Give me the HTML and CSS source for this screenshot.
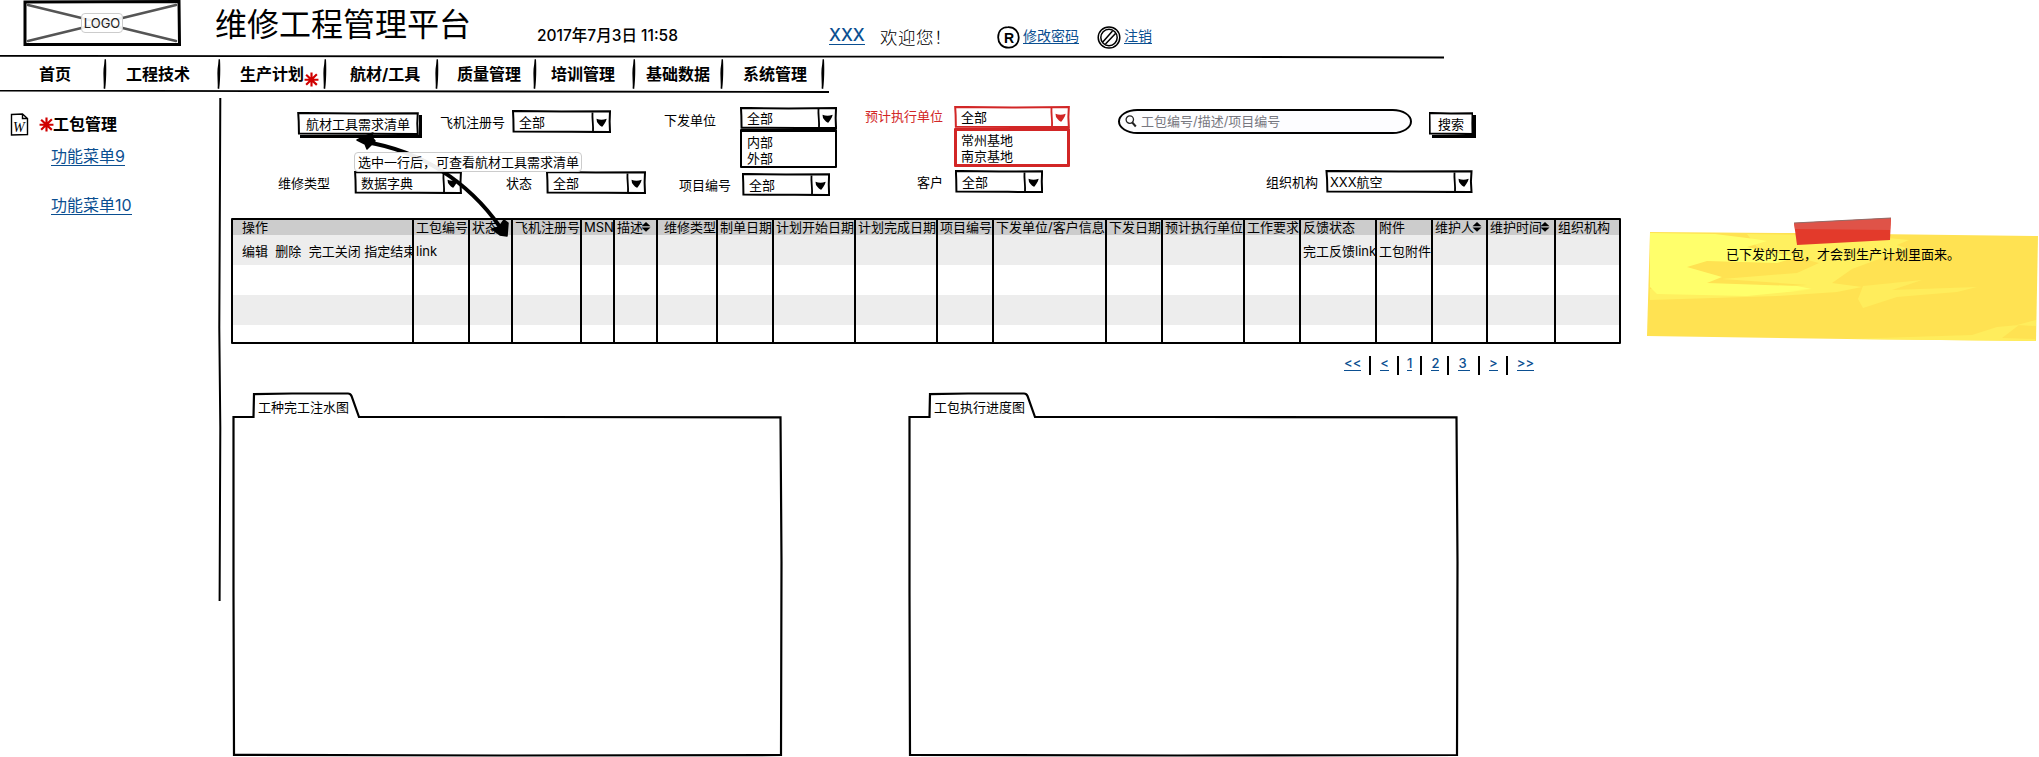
FILE: index.html
```html
<!DOCTYPE html>
<html lang="zh-CN">
<head>
<meta charset="utf-8">
<title>维修工程管理平台</title>
<link rel="stylesheet" href="styles.css">
</head>
<body>
<svg class="defs" width="0" height="0" aria-hidden="true">
  <symbol id="frame" viewBox="0 0 100 100" preserveAspectRatio="none">
    <path vector-effect="non-scaling-stroke" d="M1 4 L50 7 L99 5 L98.6 50 L99 96 L60 95 L1.6 94 L1.4 40 Z"/>
  </symbol>
  <symbol id="caret" viewBox="0 0 20 22">
    <path class="stroke" d="M1.5 1.5 C1 8 2.5 14 2 20.500"/>
    <path class="solid" d="M5.500 7.800 Q10.500 9.800 15.500 7.800 Q16 9.500 11.500 15.500 Q10 16.500 6 11 Z"/>
  </symbol>
  <symbol id="star" viewBox="0 0 14 14">
    <path d="M7 .5V13.500M.5 7.200H13.500M2 2.500L12 12M12 2.200L2 12"/>
  </symbol>
  <symbol id="sort" viewBox="0 0 10 10">
    <path d="M5 0L9.500 4.200H.5ZM.5 5.600H9.500L5 9.800Z"/>
  </symbol>
  <symbol id="sep" viewBox="0 0 4 30">
    <path d="M3 .3C3.600 10 3.200 22 2.200 30L.6 29.500C1.200 22 -.6 14 1.200 5L1.600 .3Z"/>
  </symbol>
  <symbol id="folder" viewBox="0 0 551 365">
    <path d="M1.500 25H21.500L22 2.200L60 1.500H116Q118.500 1.500 119.500 4L127 25L300 25L548.500 25.300L549.500 170L549 363L270 363.500L2 362.800L1.500 200Z"/>
  </symbol>
</svg>

<header class="header">
  <div class="logo">
    <svg width="158" height="46" viewBox="0 0 158 46">
      <path class="logo-cross" d="M5 5L153 41M153 5L5 41"/>
      <path class="logo-box" d="M2 2L156 1.500L156.500 44.500L2 44.500Z"/>
    </svg>
    <span class="logo-text">LOGO</span>
  </div>
  <h1 class="title">维修工程管理平台</h1>
  <span class="date">2017年7月3日 11:58</span>
  <a class="link user">XXX</a>
  <span class="welcome">欢迎您！</span>
  <svg class="head-icon" width="23" height="23" viewBox="0 0 23 23"><path d="M11 1.200C18 1 22 6 21.700 12C21.500 18 17 22 11.500 21.700C5 21.800 1 17 1.200 11C1.300 5 5 1.200 11 1.200Z"/><text x="7" y="17">R</text></svg>
  <a class="link pwd">修改密码</a>
  <svg class="head-icon ban" width="24" height="23" viewBox="0 0 24 23"><ellipse cx="12" cy="11.500" rx="10.800" ry="10.500"/><ellipse cx="12" cy="11.500" rx="8.200" ry="8.200"/><path d="M5.800 16L15.500 5M8.500 18L18.500 7.500"/></svg>
  <a class="link out">注销</a>
</header>
<svg class="rule" width="1444" height="4" viewBox="0 0 1444 4"><path d="M0 .8L500 1.500L1200 1.800L1444 2.500"/></svg>

<nav class="nav">
  <span class="nav-item w1">首页</span><svg class="sep"><use href="#sep"/></svg>
  <span class="nav-item w2">工程技术</span><svg class="sep"><use href="#sep"/></svg>
  <span class="nav-item w3">生产计划<svg class="star"><use href="#star"/></svg></span><svg class="sep"><use href="#sep"/></svg>
  <span class="nav-item w4">航材/工具</span><svg class="sep"><use href="#sep"/></svg>
  <span class="nav-item w5">质量管理</span><svg class="sep"><use href="#sep"/></svg>
  <span class="nav-item w6">培训管理</span><svg class="sep"><use href="#sep"/></svg>
  <span class="nav-item w7">基础数据</span><svg class="sep"><use href="#sep"/></svg>
  <span class="nav-item w8">系统管理</span><svg class="sep"><use href="#sep"/></svg>
</nav>
<svg class="rule" width="829" height="3" viewBox="0 0 829 3"><path d="M0 .6L300 1.200L829 2"/></svg>

<div class="body">
  <aside class="sidebar">
    <div class="menu">
      <div class="menu-head">
        <svg class="doc" width="19" height="23" viewBox="0 0 19 23"><path d="M1.500 1.500L12.500 1L17.500 5.500V21.500L1.500 22ZM12.500 1V5.500H17.500"/><text x="3" y="18.500">W</text></svg>
        <svg class="star"><use href="#star"/></svg><b>工包管理</b>
      </div>
      <a class="link menu-link">功能菜单9</a>
      <a class="link menu-link">功能菜单10</a>
    </div>
    <svg class="side-line" width="4" height="504" viewBox="0 0 4 504"><path d="M2.300 0L1.800 120L1.300 230L2.300 330L1.600 503"/></svg>
  </aside>

  <main class="main">
    <section class="filters">
      <div class="filter-row row-one">
        <button class="btn need"><svg class="fr"><use href="#frame"/></svg><span>航材工具需求清单</span></button>
        <label class="label l-reg">飞机注册号</label>
        <div class="select s-reg"><svg class="fr"><use href="#frame"/></svg><span>全部</span><svg class="caret"><use href="#caret"/></svg></div>
        <label class="label l-unit">下发单位</label>
        <div class="combo s-unit">
          <div class="select"><svg class="fr"><use href="#frame"/></svg><span>全部</span><svg class="caret"><use href="#caret"/></svg></div>
          <div class="options"><span>内部</span><span>外部</span></div>
        </div>
        <label class="label l-plan">预计执行单位</label>
        <div class="combo s-plan red">
          <div class="select"><svg class="fr"><use href="#frame"/></svg><span>全部</span><svg class="caret"><use href="#caret"/></svg></div>
          <div class="options"><span>常州基地</span><span>南京基地</span></div>
        </div>
        <div class="search"><svg width="12" height="13" viewBox="0 0 12 13"><circle cx="4.800" cy="4.600" r="3.700"/><path class="handle" d="M7.300 7.500L10.800 11.500"/></svg><span>工包编号/描述/项目编号</span></div>
        <button class="btn go"><svg class="fr"><use href="#frame"/></svg><span>搜索</span></button>
      </div>
      <div class="filter-row row-two">
        <label class="label l-type">维修类型</label>
        <div class="select s-type"><svg class="fr"><use href="#frame"/></svg><span>数据字典</span><svg class="caret"><use href="#caret"/></svg></div>
        <label class="label l-state">状态</label>
        <div class="select s-state"><svg class="fr"><use href="#frame"/></svg><span>全部</span><svg class="caret"><use href="#caret"/></svg></div>
        <label class="label l-item">项目编号</label>
        <div class="select s-item"><svg class="fr"><use href="#frame"/></svg><span>全部</span><svg class="caret"><use href="#caret"/></svg></div>
        <label class="label l-cust">客户</label>
        <div class="select s-cust"><svg class="fr"><use href="#frame"/></svg><span>全部</span><svg class="caret"><use href="#caret"/></svg></div>
        <label class="label l-org">组织机构</label>
        <div class="select s-org"><svg class="fr"><use href="#frame"/></svg><span>XXX航空</span><svg class="caret"><use href="#caret"/></svg></div>
      </div>
      <svg class="arrow" width="160" height="110" viewBox="0 0 160 110">
        <path class="curve" d="M16 11C70 20 118 50 150 96"/>
        <path class="tip" d="M7 9L20 3L23 2L21 5L25 10L17 18L15 13Z"/>
        <path class="tip" d="M157 105L150 104L142 98L149 96L154 89L158 92Z"/>
      </svg>
      <div class="tooltip">选中一行后，可查看航材工具需求清单</div>
    </section>

    <section class="data">
      <div class="grid">
        <div class="row head"><span>操作</span><span>工包编号</span><span>状态</span><span>飞机注册号</span><span>MSN</span><span>描述<svg class="sort"><use href="#sort"/></svg></span><span class="wide">维修类型</span><span>制单日期</span><span>计划开始日期</span><span>计划完成日期</span><span>项目编号</span><span>下发单位/客户信息</span><span>下发日期</span><span>预计执行单位</span><span>工作要求</span><span>反馈状态</span><span>附件</span><span>维护人<svg class="sort"><use href="#sort"/></svg></span><span>维护时间<svg class="sort"><use href="#sort"/></svg></span><span>组织机构</span></div>
        <div class="row odd"><span>编辑  删除  完工关闭 指定结束</span><span>link</span><span></span><span></span><span></span><span></span><span></span><span></span><span></span><span></span><span></span><span></span><span></span><span></span><span></span><span>完工反馈link</span><span>工包附件</span><span></span><span></span><span></span></div>
        <div class="row"><span></span><span></span><span></span><span></span><span></span><span></span><span></span><span></span><span></span><span></span><span></span><span></span><span></span><span></span><span></span><span></span><span></span><span></span><span></span><span></span></div>
        <div class="row odd"><span></span><span></span><span></span><span></span><span></span><span></span><span></span><span></span><span></span><span></span><span></span><span></span><span></span><span></span><span></span><span></span><span></span><span></span><span></span><span></span></div>
        <div class="row last"><span></span><span></span><span></span><span></span><span></span><span></span><span></span><span></span><span></span><span></span><span></span><span></span><span></span><span></span><span></span><span></span><span></span><span></span><span></span><span></span></div>
      </div>
      <div class="note">
        <svg width="392" height="126" viewBox="0 0 392 126">
          <path fill="#ffe252" d="M3 15L145 16L391 19L389 124L200 122L0 119Z"/>
          <path fill="#fff05f" d="M100 17L220 19L262 23L250 28L262 32L232 42L205 52L185 66L215 70L190 75L130 79L3 83L3 72L60 73L160 68L75 62L150 56L172 46L110 30Z"/>
          <path fill="#ffff6b" d="M3 16L68 17L108 22L120 24L100 30L150 40L130 46L60 44L40 50L75 60L60 66L150 69L165 72L110 76L60 77L160 73L100 79L10 77L3 70Z"/>
          <path fill="#ffed5c" d="M216 69L275 63L245 73L330 70L310 75L250 80L216 91L211 82ZM325 118L350 110L372 108L355 121L388 122L389 124L200 122ZM370 108L389 103L389 109Z"/>
          <path fill="#e33a2b" d="M147 6L244 1L243 23L150 28Z"/>
          <path fill="#df5348" d="M147 6L244 1L243 13L148 12Z"/>
          <path fill="none" stroke="#936c68" d="M147 6L244 1"/>
        </svg>
        <span>已下发的工包，才会到生产计划里面来。</span>
      </div>
    </section>

    <div class="pager"><a class="link">&lt;&lt;</a><i></i><a class="link">&lt;</a><i></i><a class="link one">1</a><i></i><a class="link">2</a><i></i><a class="link">3&nbsp;</a><i></i><a class="link">&gt;</a><i></i><a class="link">&gt;&gt;</a></div>

    <section class="charts">
      <div class="panel"><svg width="551" height="365"><use href="#folder"/></svg><span>工种完工注水图</span></div>
      <div class="panel"><svg width="551" height="365"><use href="#folder"/></svg><span>工包执行进度图</span></div>
    </section>
  </main>
</div>
</body>
</html>
```

FILE: styles.css
```css
* { box-sizing: border-box; }
body {
  margin: 0;
  width: 2039px;
  height: 757px;
  overflow: hidden;
  background: #fff;
  color: #000;
  font: 13px/16px Inter, "Noto Sans CJK SC", sans-serif;
}
svg { display: block; flex: none; fill: none; stroke: #000; }
.defs { position: absolute; }
.link { color: #0b4f91; text-decoration: none; border-bottom: 1px solid #0b4f91; white-space: nowrap; }

/* header */
.header { display: flex; align-items: flex-start; height: 55px; white-space: nowrap; }
.header > * { flex: none; }
.logo { display: grid; place-items: center; margin-left: 23px; width: 158px; height: 46px; }
.logo > * { grid-area: 1 / 1; }
.logo-cross { stroke: #555; stroke-width: 2.5; stroke-linecap: round; }
.logo-box { stroke-width: 3; }
.logo-text { padding: 0 2px; height: 20px; border: 1px solid #ccc; border-radius: 4px; background: rgba(255,255,255,.9); font-size: 13px; line-height: 18px; color: #222; }
.title { margin: 5px 0 0 34px; width: 322px; font-size: 32px; line-height: 40px; font-weight: 400; }
.date { margin-top: 26px; width: 292px; font-size: 15.5px; line-height: 20px; font-weight: 500; }
.user { margin-top: 26px; width: 36px; font-size: 17px; line-height: 18px; font-weight: 500; }
.welcome { margin: 27px 0 0 15px; width: 117px; font-size: 17.5px; line-height: 22px; font-weight: 300; letter-spacing: .5px; }
.head-icon { margin-top: 26px; stroke-width: 1.8; }
.head-icon text { font: 700 14px "Liberation Sans", sans-serif; fill: #000; stroke: none; }
.head-icon.ban { margin-left: 18px; stroke-width: 1.5; }
.pwd, .out { margin: 28px 0 0 3px; font-size: 14px; line-height: 15px; }
.pwd { width: 56px; }
.rule { stroke-width: 1.8; }

/* navigation */
.nav { display: flex; height: 31px; align-items: flex-start; }
.nav-item { display: flex; flex: none; padding-top: 4px; font-size: 16px; line-height: 22px; font-weight: 700; white-space: nowrap; }
.sep { width: 4px; height: 30px; fill: #000; stroke: none; }
.w1 { width: 103px; padding-left: 39px; }
.w2 { width: 110px; padding-left: 19px; }
.w3 { width: 102px; padding-left: 19px; }
.w4 { width: 108px; padding-left: 23px; }
.w5 { width: 94px; padding-left: 18px; }
.w6 { width: 95px; padding-left: 14px; }
.w7 { width: 84px; padding-left: 10px; }
.w8 { width: 97px; padding-left: 19px; }
.star { width: 15px; height: 15px; stroke: #d00000; stroke-width: 2; }
.nav .star { margin-top: 9px; }

/* sidebar */
.body { display: flex; }
.sidebar { display: flex; flex: none; width: 220px; padding-top: 5px; }
.menu { display: flex; flex-direction: column; align-items: flex-start; flex: none; width: 218px; padding: 15px 0 0 10px; }
.menu-head { display: flex; align-items: center; height: 23px; font-size: 16px; line-height: 22px; }
.menu-head .star { margin-left: 10px; }
.menu-head b { margin: -1px 0 0 -1px; }
.doc { stroke-width: 1.4; }
.doc text { font: italic 14px "Liberation Serif", serif; fill: #000; stroke: none; }
.menu-link { margin: 11px 0 0 41px; font-size: 16px; line-height: 18px; }
.menu-link + .menu-link { margin-top: 30px; }
.side-line { stroke-width: 2; }

/* filters */
.main { flex: none; width: 1819px; }
.filters { position: relative; height: 124px; padding-top: 12px; }
.filter-row { display: flex; align-items: flex-start; }
.filter-row > * { flex: none; }
.row-one { height: 65px; }
.label { white-space: nowrap; }
.btn { display: grid; place-items: center; padding: 0; border: 0; height: 23px; background: #fff; font: inherit; color: inherit; box-shadow: 3px 3px 0 #000; }
.btn > *, .select > * { grid-area: 1 / 1; }
.fr { width: 100%; height: 100%; stroke-width: 2; }
.need { margin: 7px 0 0 77px; width: 122px; }
.go { margin: 7px 0 0 17px; width: 44px; }
.select { display: grid; align-items: center; height: 23px; background: #fff; }
.select span { padding-left: 7px; }
.caret { justify-self: end; width: 20px; height: 22px; }
#caret .stroke { stroke-width: 1.8; }
#caret .solid { fill: var(--ink, #000); stroke: none; }
.combo .select { height: 22px; }
.options { display: flex; flex-direction: column; border: 2px solid #000; border-top-width: 3px; border-radius: 1px; height: 39px; padding: 2px 0 0 5px; }
.l-reg { margin: 9px 0 0 21px; width: 72px; }
.s-reg { margin-top: 5px; width: 99px; }
.l-unit { margin: 7px 0 0 53px; width: 76px; }
.s-unit { margin-top: 2px; width: 97px; }
.l-plan { margin: 3px 0 0 28px; width: 89px; color: #d22626; }
.s-plan { margin-top: 1px; width: 116px; }
.red svg { stroke: #d22626; --ink: #d22626; }
.red .options { border: 3px solid #d22626; padding: 1px 0 0 4px; }
.search { display: flex; align-items: center; margin: 4px 0 0 48px; width: 294px; height: 25px; padding-left: 5px; border: 2px solid #000; border-radius: 20px / 13px; background: #fdfdff; color: #777780; }
.search svg { stroke-width: 1.3; stroke: #222; margin-right: 4px; }
.search .handle { stroke-width: 2; }
.search span { margin-top: -1px; }
.l-type { margin: 5px 0 0 58px; width: 76px; }
.s-type { margin-top: 1px; width: 108px; }
.l-state { margin: 5px 0 0 44px; width: 40px; }
.s-state { margin-top: 1px; width: 100px; }
.l-item { margin: 7px 0 0 33px; width: 63px; }
.s-item { margin-top: 3px; width: 88px; }
.l-cust { margin: 4px 0 0 87px; width: 38px; }
.s-cust { width: 88px; }
.l-org { margin: 4px 0 0 223px; width: 59px; }
.s-org { width: 148px; }
.s-org span { padding-left: 5px; }
.tooltip { position: absolute; left: 134px; top: 59px; width: 228px; height: 20px; padding-left: 3px; border: 1px solid #ccc; border-radius: 4px; background: rgba(255,255,255,.93); line-height: 18px; white-space: nowrap; }
.arrow { position: absolute; left: 130px; top: 38px; }
.curve { stroke-width: 4; }
.tip { fill: #000; stroke-width: 1.5; stroke-linejoin: round; }

/* table and note */
.data { display: flex; align-items: flex-start; padding-left: 11px; height: 127px; }
.grid { flex: none; width: 1390px; margin-top: 1px; border: 2px solid #000; border-top-width: 2px; border-radius: 1px; }
.row { display: grid; grid-template-columns: 181px 56px 43px 69px 33px 43px 60px 56px 82px 82px 56px 113px 56px 82px 56px 76px 56px 55px 68px 63px; height: 30px; }
.row > span { display: flex; align-items: center; overflow: hidden; border-right: 2px solid #000; padding: 1px 0 0 2px; white-space: pre; }
.row > span:first-child { padding-left: 9px; }
.row > span:last-child { border-right: 0; }
.row > .wide { padding-left: 6px; }
.row.head { height: 15px; background: #ccc; }
.odd { background: #ededed; }
.row.head > span { padding-top: 0; line-height: 15px; overflow: visible; }
.last { height: 17px; }
.sort { width: 10px; height: 10px; margin: -2px 0 0 -2px; fill: #000; stroke: none; }
.note { display: grid; flex: none; margin-left: 26px; width: 392px; }
.note > * { grid-area: 1 / 1; }
.note svg { stroke: none; }
.note span { justify-self: center; padding-top: 29px; }

/* pager */
.pager { display: flex; margin: 12px 0 0 1124px; height: 20px; font-size: 13px; font-weight: 500; }
.pager i { width: 2px; height: 19px; background: #000; margin: 0 9px 0 8px; }
.pager .link { height: 15px; line-height: 14px; }
.pager .one { margin-left: -1px; }

/* chart panels */
.charts { display: flex; gap: 125px; margin: 16px 0 0 12px; }
.panel { display: grid; flex: none; width: 551px; }
.panel > * { grid-area: 1 / 1; }
.panel svg { stroke-width: 2.2; }
.panel span { padding: 7px 0 0 26px; }
```
